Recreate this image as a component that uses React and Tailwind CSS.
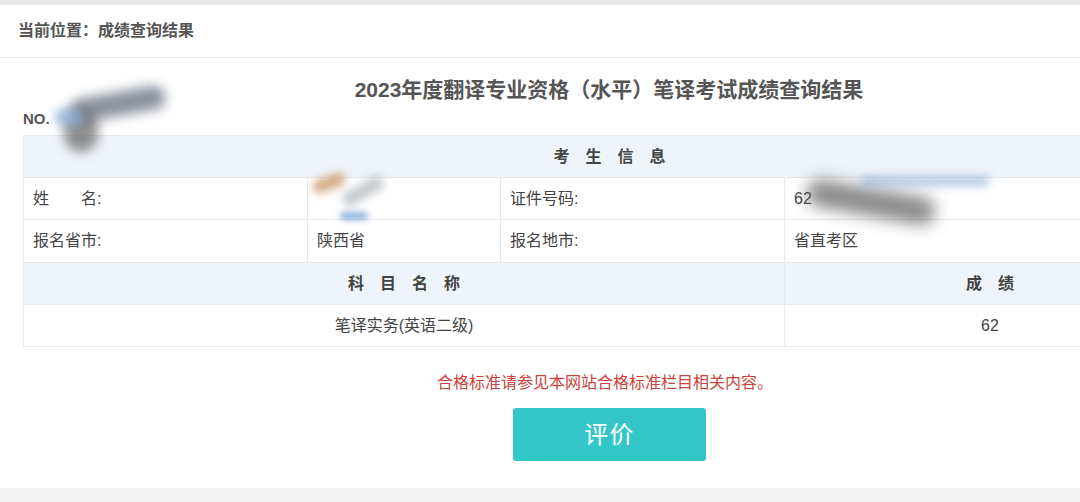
import React from 'react';

const cellBase = 'h-[42px] flex items-center border-r border-b border-[#e6e9ec] text-[16px] text-[#444]';

function InfoCell({ children, className = '' }) {
  return <div className={`${cellBase} px-[9px] bg-white ${className}`}>{children}</div>;
}

function HeadCell({ children, className = '' }) {
  return (
    <div className={`${cellBase} justify-center bg-[#eef4fa] font-bold text-[16px] text-[#333] tracking-[1em] pl-[16px] ${className}`}>
      {children}
    </div>
  );
}

// scribbled-over personal data
function Smudge({ className }) {
  return <div className={`absolute pointer-events-none rounded-full ${className}`} />;
}

export default function App() {
  return (
    <div
      className="relative w-[1080px] h-[502px] overflow-hidden bg-white"
      style={{ fontFamily: '"Liberation Sans", "Noto Sans CJK SC", sans-serif' }}
    >
      <div className="h-[5px] bg-[#e8e8e8]" />
      <div className="h-[53px] flex items-center pl-[18px] border-b border-[#ebebeb] text-[16px] font-bold text-[#555]">
        当前位置：成绩查询结果
      </div>

      <div className="mt-[19px] text-center text-[21px] leading-[26px] font-bold text-[#555] pl-[138px]">
        2023年度翻译专业资格（水平）笔译考试成绩查询结果
      </div>
      <div className="mt-[7px] pl-[23px] text-[15px] leading-[18px] font-bold text-[#555]">NO.</div>

      <div className="mt-[7px] ml-[23px] w-[1172px] grid grid-cols-[284px_193px_284px_411px] border-l border-t border-[#e6e9ec]">
        <HeadCell className="col-span-4">考生信息</HeadCell>

        <InfoCell>
          <span>姓</span>
          <span className="ml-[32px]">名:</span>
        </InfoCell>
        <InfoCell />
        <InfoCell>证件号码:</InfoCell>
        <InfoCell>62</InfoCell>

        <InfoCell className="h-[43px]">报名省市:</InfoCell>
        <InfoCell className="h-[43px]">陕西省</InfoCell>
        <InfoCell className="h-[43px]">报名地市:</InfoCell>
        <InfoCell className="h-[43px]">省直考区</InfoCell>

        <HeadCell className="col-span-3">科目名称</HeadCell>
        <HeadCell>成绩</HeadCell>

        <div className={`${cellBase} col-span-3 justify-center bg-white`}>笔译实务(英语二级)</div>
        <div className={`${cellBase} justify-center bg-white`}>62</div>
      </div>

      <div className="mt-[26px] text-center text-[16px] leading-[20px] text-[#c9423c] pl-[130px]">
        合格标准请参见本网站合格标准栏目相关内容。
      </div>
      <div className="mt-[15px] flex justify-center pl-[139px]">
        <button className="w-[193px] h-[53px] rounded-[3px] bg-[#33c6c9] text-white text-[24px] tracking-[0.05em]">
          评价
        </button>
      </div>

      <div className="absolute left-0 right-0 bottom-0 h-[14px] bg-[#f3f3f3]" />

      {/* ink blots */}
      <Smudge className="left-[70px] top-[92px] w-[96px] h-[24px] bg-[#6f7887] blur-[6px] rotate-[-10deg] opacity-80" />
      <Smudge className="left-[64px] top-[108px] w-[34px] h-[44px] bg-[#6a6a6a] blur-[6px] opacity-75" />
      <Smudge className="left-[54px] top-[108px] w-[30px] h-[18px] bg-[#8fb3e0] blur-[5px] opacity-70" />
      <Smudge className="left-[312px] top-[176px] w-[34px] h-[14px] bg-[#c99a6a] blur-[4px] rotate-[-20deg] opacity-80" />
      <Smudge className="left-[340px] top-[184px] w-[46px] h-[14px] bg-[#9aa3ad] blur-[5px] rotate-[-30deg] opacity-60" />
      <Smudge className="left-[340px] top-[212px] w-[28px] h-[8px] bg-[#5b8fd0] blur-[3px] opacity-70" />
      <Smudge className="left-[806px] top-[188px] w-[130px] h-[28px] bg-[#5b5b5b] blur-[8px] rotate-[10deg] opacity-70" />
      <Smudge className="left-[860px] top-[176px] w-[130px] h-[10px] bg-[#8fb0d8] blur-[5px] opacity-70" />
    </div>
  );
}
